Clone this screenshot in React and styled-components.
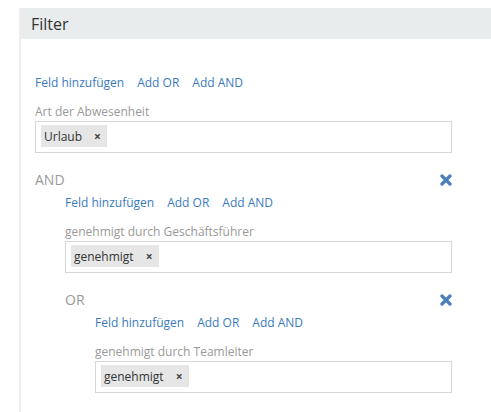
import React from "react";
import styled, { createGlobalStyle } from "styled-components";

const GlobalStyle = createGlobalStyle`
  body {
    margin: 0;
    background: #fff;
    font-family: "Open Sans", "Liberation Sans", sans-serif;
    color: #333;
  }
`;

const filter = {
  field: { label: "Art der Abwesenheit", value: "Urlaub" },
  child: {
    op: "AND",
    field: { label: "genehmigt durch Geschäftsführer", value: "genehmigt" },
    child: {
      op: "OR",
      field: { label: "genehmigt durch Teamleiter", value: "genehmigt" },
    },
  },
};

const RemoveIcon = () => (
  <svg width="12" height="12" viewBox="0 0 12 12">
    <path
      d="M2 2 L10 10 M10 2 L2 10"
      stroke="#4a7fba"
      strokeWidth="3.2"
      strokeLinecap="round"
    />
  </svg>
);

const Actions = () => (
  <LinkRow>
    <Link>Feld hinzufügen</Link>
    <Link>Add OR</Link>
    <Link>Add AND</Link>
  </LinkRow>
);

const Field = ({ label, value }) => (
  <>
    <Label>{label}</Label>
    <TagInput>
      <Tag>
        {value}
        <TagRemove>×</TagRemove>
      </Tag>
    </TagInput>
  </>
);

const Group = ({ node }) => (
  <GroupWrap>
    <GroupHead>
      <span>{node.op}</span>
      <RemoveIcon />
    </GroupHead>
    <GroupBody>
      <Actions />
      <Field {...node.field} />
      {node.child && <Group node={node.child} />}
    </GroupBody>
  </GroupWrap>
);

const App = () => {
  return (
    <Page>
      <GlobalStyle />
      <Panel>
        <PanelHeader>Filter</PanelHeader>
        <PanelBody>
          <Actions />
          <Field {...filter.field} />
          <Group node={filter.child} />
        </PanelBody>
      </Panel>
    </Page>
  );
};

export default App;

const Page = styled.div`
  box-sizing: border-box;
  min-height: 100vh;
  padding: 8px 0 0 19px;
  display: flex;
`;

const Panel = styled.div`
  flex: 1;
  border-left: 2px solid #eceeee;
`;

const PanelHeader = styled.div`
  display: flex;
  align-items: center;
  height: 31px;
  padding-left: 10px;
  background-color: #e8ecec;
  font-size: 16px;
  color: #333;
`;

const PanelBody = styled.div`
  padding: 34px 39px 0 14px;
`;

const LinkRow = styled.div`
  display: flex;
  gap: 13px;
  margin-bottom: 9px;
  font-size: 12px;
  line-height: 20px;
`;

const Link = styled.a`
  color: #3a7bbf;
  cursor: pointer;
`;

const Label = styled.div`
  padding-top: 1px;
  font-size: 12px;
  line-height: 18px;
  color: #999;
`;

const TagInput = styled.div`
  box-sizing: border-box;
  display: flex;
  align-items: flex-start;
  height: 32px;
  padding: 3px 5px;
  border: 1px solid #d3d7d7;
`;

const Tag = styled.span`
  display: flex;
  align-items: center;
  height: 22px;
  padding: 0 6px 0 3px;
  background-color: #e6e6e6;
  font-size: 12px;
  color: #333;
`;

const TagRemove = styled.span`
  margin-left: 12px;
  font-size: 12px;
  font-weight: 700;
  color: #444;
`;

const GroupWrap = styled.div`
  margin-top: 17px;
`;

const GroupHead = styled.div`
  display: flex;
  justify-content: space-between;
  align-items: center;
  height: 20px;
  font-size: 14px;
  line-height: 20px;
  color: #999;
`;

const GroupBody = styled.div`
  padding-left: 30px;
  padding-top: 3px;
`;
